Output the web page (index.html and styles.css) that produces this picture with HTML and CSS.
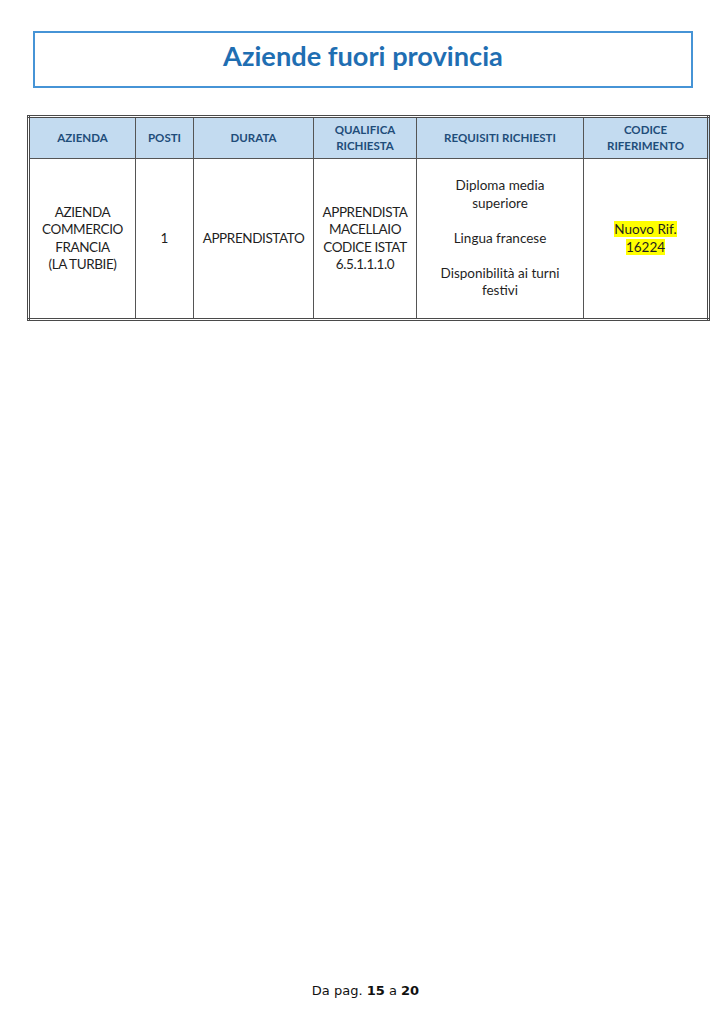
FILE: index.html
```html
<!DOCTYPE html>
<html lang="it">
<head>
<meta charset="utf-8">
<title>Aziende fuori provincia</title>
<link rel="stylesheet" href="styles.css">
</head>
<body>
<div class="page">
  <header class="title-box">
    <h1 class="title">Aziende fuori provincia</h1>
  </header>

  <table class="offers">
    <colgroup>
      <col class="c1"><col class="c2"><col class="c3"><col class="c4"><col class="c5"><col class="c6">
    </colgroup>
    <thead>
      <tr>
        <th>AZIENDA</th>
        <th>POSTI</th>
        <th>DURATA</th>
        <th>QUALIFICA<br>RICHIESTA</th>
        <th>REQUISITI RICHIESTI</th>
        <th>CODICE<br>RIFERIMENTO</th>
      </tr>
    </thead>
    <tbody>
      <tr>
        <td class="caps">AZIENDA<br>COMMERCIO<br>FRANCIA<br>(LA TURBIE)</td>
        <td>1</td>
        <td class="caps">APPRENDISTATO</td>
        <td class="caps">APPRENDISTA<br>MACELLAIO<br>CODICE ISTAT<br>6.5.1.1.1.0</td>
        <td>
          <p class="req">Diploma media<br>superiore</p>
          <p class="req">Lingua francese</p>
          <p class="req">Disponibilità ai turni<br>festivi</p>
        </td>
        <td><span class="hl">Nuovo Rif.<br>16224</span></td>
      </tr>
    </tbody>
  </table>

  <div class="spacer"></div>

  <footer class="footer">Da pag. <b>15</b> a <b>20</b></footer>
</div>
</body>
</html>
```

FILE: styles.css
```css
html, body {
  margin: 0;
  padding: 0;
  background: #ffffff;
}

.page {
  width: 724px;
  height: 1024px;
  display: flex;
  flex-direction: column;
  font-family: "Lato", "Open Sans", sans-serif;
  color: #1f1f1f;
}

.title-box {
  margin: 31px 0 0 33px;
  width: 656px;
  height: 46px;
  padding-bottom: 7px;
  border: 2px solid #4694d6;
  display: flex;
  align-items: center;
  justify-content: center;
  box-sizing: content-box;
}

.title {
  margin: 0;
  font-size: 27.2px;
  font-weight: 700;
  color: #1f6eb2;
  line-height: 1;
}

.offers {
  margin: 27px 0 0 27px;
  width: 683px;
  border-collapse: collapse;
  border: 3px double #4a4a4a;
  table-layout: fixed;
}

.c1 { width: 107px; }
.c2 { width: 58px; }
.c3 { width: 120px; }
.c4 { width: 103px; }
.c5 { width: 167px; }
.c6 { width: 125px; }

.offers th {
  background: #c3dbf0;
  color: #1f4d7a;
  font-size: 11.5px;
  font-weight: 700;
  line-height: 16px;
  height: 40px;
  padding: 0 4px;
  border: 1px solid #555555;
  text-align: center;
  vertical-align: middle;
}

.offers td {
  font-size: 13.5px;
  line-height: 17.5px;
  height: 159px;
  padding: 0 4px;
  border: 1px solid #555555;
  text-align: center;
  vertical-align: middle;
}

.offers td.caps {
  letter-spacing: -0.4px;
}

.req {
  margin: 0;
}

.req + .req {
  margin-top: 17.5px;
}

.hl {
  background: #ffff00;
  color: #1f1f1f;
}

.spacer {
  flex: 1;
}

.footer {
  font-family: "DejaVu Sans", sans-serif;
  font-size: 13px;
  text-align: center;
  margin: 0 0 26px 7px;
  color: #111111;
}
```
